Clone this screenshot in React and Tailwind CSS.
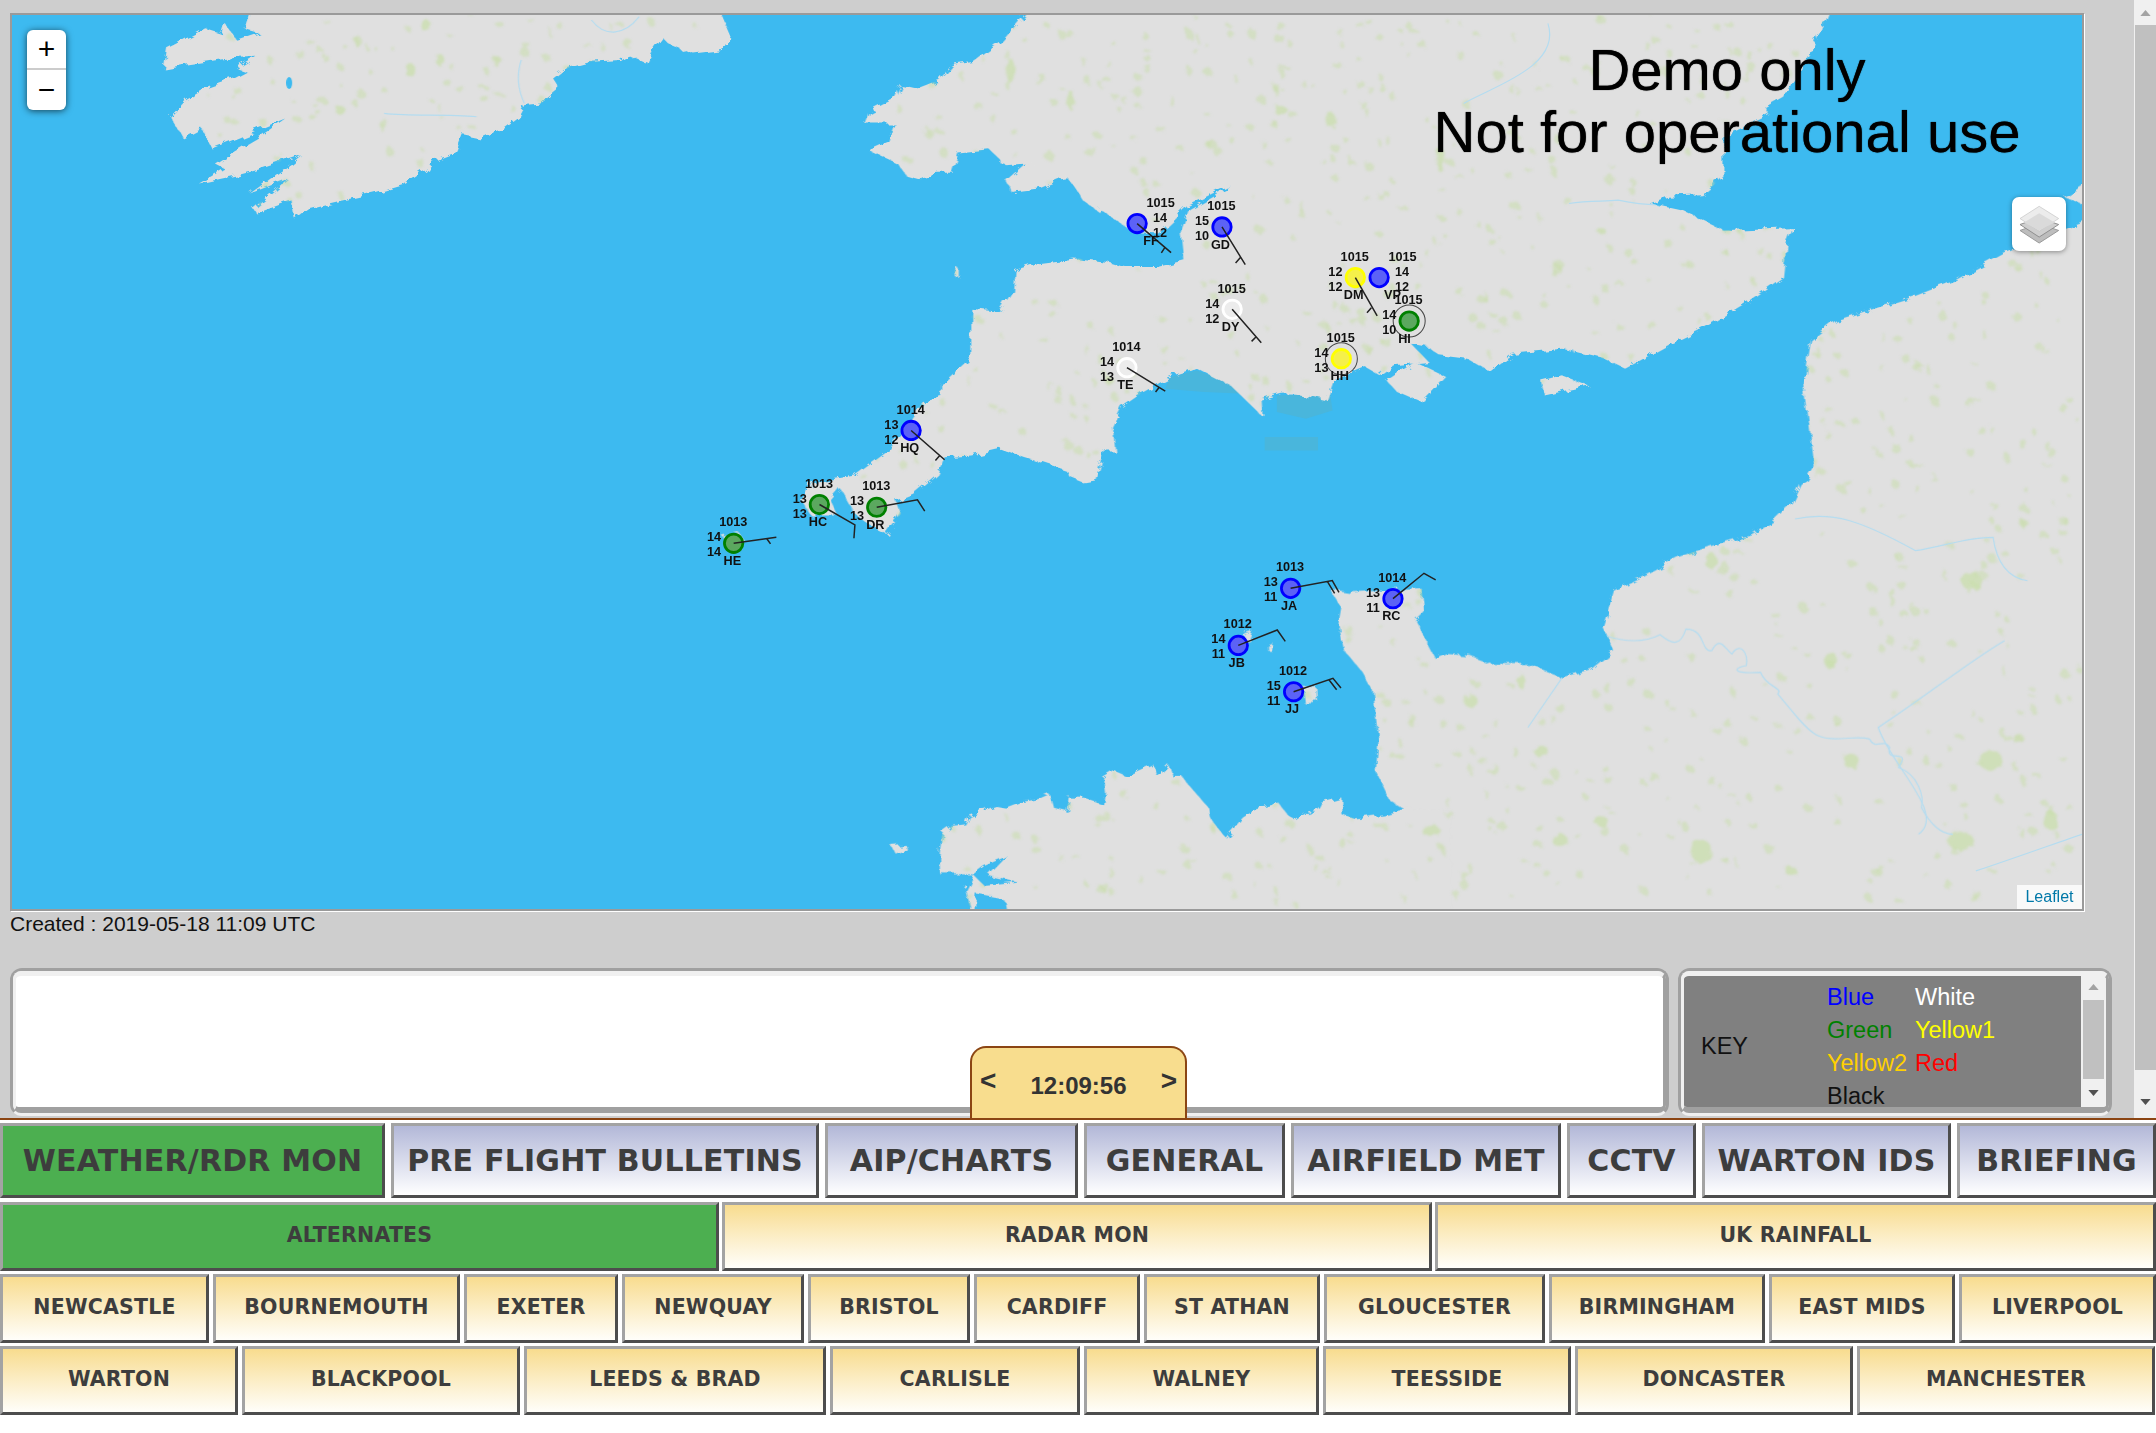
const Z9 = 'translate(100 0) scale(0.6378 0.3333)'
const Z10 = 'translate(1000 0) scale(0.7015 0.3333)'
const Z3 = 'translate(680 180) scale(0.4847 0.3333)'
const Z4 = 'translate(1200 540) scale(0.3333)'
const Z11 = 'translate(1200 480) scale(0.574 0.3333)'
const Z12 = 'translate(850 700) scale(0.3827 0.3333)'

// coast outlines, traced per map area
const LAND = [
  { t: Z9, d: 'M235,45 L228,88 L250,100 L215,122 L195,68 L190,100 L165,85 L125,125 L105,145 L100,205 L130,195 L200,175 L245,170 L215,205 L230,215 L210,235 L165,265 L135,300 L110,350 L120,380 L130,415 L160,385 L175,445 L240,395 L290,355 L250,410 L205,460 L180,490 L195,505 L155,550 L215,525 L245,510 L315,465 L300,490 L235,580 L295,535 L240,625 L245,640 L300,600 L305,655 L325,625 L370,605 L430,580 L475,555 L510,510 L520,485 L560,455 L570,405 L595,415 L630,385 L655,350 L665,315 L690,310 L720,265 L710,235 L730,205 L770,185 L815,180 L825,165 L855,190 L865,150 L880,110 L890,130 L930,160 L975,150 L988,110 L970,30 L235,30 Z' },
  { t: Z9, d: 'M1460,30 L1440,95 L1405,135 L1370,185 L1335,195 L1315,240 L1280,265 L1255,255 L1245,295 L1205,335 L1198,370 L1245,370 L1235,425 L1205,450 L1250,490 L1265,530 L1285,540 L1310,515 L1335,515 L1345,460 L1395,450 L1420,495 L1450,490 L1420,540 L1430,575 L1470,560 L1490,535 L1520,535 L1540,600 L1568,640 L1568,30 Z' },
  { t: Z10, d: 'M40,30 L1180,30 L1165,110 L1140,210 L1115,290 L1090,320 L1095,345 L1030,410 L1030,530 L1000,585 L950,590 L925,610 L970,630 L1030,690 L1130,680 L1120,730 L1115,830 L1060,910 L1000,985 L955,1030 L890,1105 L860,1075 L800,1045 L730,1060 L695,1112 L665,1075 L625,1065 L610,1040 L585,1030 L610,1085 L560,1095 L540,1125 L520,1100 L475,1140 L465,1200 L420,1180 L370,1175 L372,1245 L330,1160 L280,1105 L230,1140 L170,1185 L155,1290 L135,1440 L120,1445 L95,1410 L0,1345 L0,930 L18,870 L20,810 L50,790 L105,775 L150,790 L205,810 L262,780 L258,700 L270,630 L320,570 L355,470 L382,395 L375,430 L325,555 L265,620 L225,700 L190,695 L150,640 L115,590 L95,530 L55,565 L15,575 L15,530 L45,490 L0,490 L0,130 Z' },
  { t: Z10, d: 'M550,1140 L590,1085 L635,1130 L600,1207 L565,1175 Z' },
  { t: Z10, d: 'M770,1140 L800,1125 L838,1155 L775,1185 Z' },
  { t: Z10, d: 'M1130,1500 L1160,1400 L1145,1150 L1155,1020 L1190,960 L1300,890 L1360,840 L1430,760 L1520,680 L1560,650 L1560,1500 Z' },
  { t: Z10, d: 'M1515,590 L1560,535 L1560,630 Z' },
  { t: Z3, d: 'M690,270 L760,250 L820,235 L880,245 L915,260 L1040,260 L1300,300 L1330,630 L1240,640 L1190,660 L1195,705 L1170,640 L1115,590 L1065,565 L1010,590 L955,635 L910,680 L890,740 L895,810 L860,810 L850,890 L835,905 L800,885 L795,860 L710,830 L660,805 L600,825 L545,830 L530,880 L480,940 L445,960 L455,1000 L425,1060 L395,1040 L360,1000 L330,925 L310,960 L325,1005 L270,1005 L250,960 L270,905 L320,895 L360,885 L430,810 L500,665 L540,650 L540,610 L600,530 L600,385 L660,395 L690,330 Z' },
  { t: Z3, d: 'M85,1065 L120,1055 L135,1085 L110,1105 Z' },
  { t: Z3, d: 'M565,260 L572,262 L572,290 L566,288 Z' },
  { t: Z11, d: 'M355,985 L330,960 L305,870 L310,780 L300,630 L280,570 L250,510 L240,430 L245,380 L225,325 L260,335 L320,330 L385,325 L390,395 L375,420 L410,535 L430,520 L470,525 L510,550 L570,550 L630,590 L680,565 L720,510 L700,440 L720,330 L765,290 L830,230 L900,190 L960,160 L1000,115 L1030,65 L1045,10 L1055,0 L1568,0 L1568,1320 L0,1320 L0,970 L20,1020 L45,1075 L95,990 L135,965 L160,1020 L200,985 L245,950 L245,1000 L265,1015 L320,1000 Z' },
  { t: Z12, d: 'M235,520 L232,470 L240,395 L265,375 L300,370 L310,345 L380,315 L405,320 L440,305 L490,295 L520,280 L530,320 L565,330 L570,290 L610,290 L660,310 L665,275 L660,230 L690,210 L720,225 L790,190 L800,225 L830,190 L840,225 L865,225 L890,260 L935,320 L940,360 L980,410 L1025,350 L1060,325 L1115,310 L1125,335 L1160,355 L1185,335 L1215,340 L1230,305 L1280,290 L1280,340 L1320,352 L1400,340 L1450,325 L1568,330 L1568,660 L410,660 L400,595 L330,580 L320,660 L300,565 L320,520 L350,555 L440,545 L360,525 L410,465 L350,495 L320,520 Z' },
  { t: Z12, d: 'M108,435 L145,432 L148,445 L118,458 Z' },
  { t: Z4, d: 'M305,435 L350,440 L352,482 L310,485 Z' },
  { t: Z4, d: 'M130,278 L155,270 L145,298 L128,300 Z' },
  { t: Z4, d: 'M202,315 L218,308 L214,330 L203,330 Z' },
]

const RIVERS = [
  { t: Z11, d: 'M705,465 C750,490 780,480 800,462 C820,490 835,500 845,445 C880,445 870,515 890,510 C905,460 915,510 925,520 C940,480 955,520 950,555 C930,560 920,580 975,575 C985,620 1015,620 1005,640 C1030,690 1050,740 1070,760 C1100,790 1140,760 1165,775 C1175,810 1190,770 1200,800 C1190,850 1240,800 1215,860 C1250,880 1260,950 1255,980 C1270,1030 1290,1060 1310,1060' },
  { t: Z11, d: 'M1035,115 C1100,90 1150,120 1245,210 C1290,200 1330,170 1380,170 C1385,230 1400,290 1440,300' },
  { t: Z11, d: 'M630,590 C610,640 590,690 570,740' },
  { t: Z11, d: 'M1250,1060 C1300,1000 1200,850 1180,740 C1260,650 1340,540 1400,480' },
  { t: Z11, d: 'M1350,1170 C1420,1130 1500,1080 1535,1060' },
  { t: Z10, d: 'M1020,590 C960,615 940,625 880,600 C860,605 840,600 810,610' },
  { t: Z10, d: 'M780,70 C800,200 700,260 660,310' },
  { t: Z9, d: 'M770,60 C790,110 820,110 845,50 M660,180 C650,240 660,290 665,310 M445,340 C490,350 540,340 590,350' },
]

const SHALLOWS = [
  { t: Z3, d: 'M1010,590 L1065,570 L1115,595 L1165,640 L1080,635 L1000,625 Z' },
  { t: Z3, d: 'M1230,645 L1340,640 L1345,690 L1290,715 L1230,695 Z' },
  { t: Z3, d: 'M1205,770 L1315,770 L1315,810 L1205,810 Z' },
]

// hand placed woodland blobs
const WOODS = [
  [1470, 700, 7, 6], [1540, 750, 7, 6], [1700, 850, 10, 12], [1830, 660, 6, 9], [1990, 760, 12, 10],
  [1970, 580, 10, 9], [1430, 830, 9, 6], [1600, 820, 7, 5], [1790, 870, 6, 4], [1560, 840, 8, 6],
  [1960, 840, 13, 9], [1850, 760, 8, 7], [2050, 820, 7, 10], [1520, 680, 4, 7], [1710, 560, 6, 8],
  [1280, 110, 7, 4], [1330, 120, 4, 8], [1440, 160, 4, 12], [1010, 70, 4, 12], [1070, 100, 3, 10],
  [425, 25, 6, 5], [410, 70, 5, 7], [340, 110, 5, 4], [440, 60, 4, 6], [1520, 400, 5, 3], [1600, 230, 4, 3],
]

const mulberry = seed => () => {
  seed = (seed + 0x6d2b79f5) | 0
  let t = Math.imul(seed ^ (seed >>> 15), 1 | seed)
  t = (t + Math.imul(t ^ (t >>> 7), 61 | t)) ^ t
  return ((t ^ (t >>> 14)) >>> 0) / 4294967296
}
const rnd = mulberry(42)
const SPECKS = Array.from({ length: 2200 }, () => [
  200 + rnd() * 1880, 15 + rnd() * 890, 1 + rnd() * 4, 1 + rnd() * 4,
])

// x, y: circle centre on the page, right: figures stand on the right side
const STATIONS = [
  { id: 'FF', qnh: 1015, a: 14, b: 12, x: 1136.6, y: 223.3, c: 'blue', right: true, idx: 14.5 },
  { id: 'GD', qnh: 1015, a: 15, b: 10, x: 1221.4, y: 226.7, c: 'blue' },
  { id: 'DM', qnh: 1015, a: 12, b: 12, x: 1354.7, y: 277.3, c: 'yellow' },
  { id: 'VP', qnh: 1015, a: 14, b: 12, x: 1378.5, y: 277.3, c: 'blue', right: true, idx: 14 },
  { id: 'DY', qnh: 1015, a: 14, b: 12, x: 1231.6, y: 309, c: 'white' },
  { id: 'TE', qnh: 1014, a: 14, b: 13, x: 1126.4, y: 367.3, c: 'white' },
  { id: 'HI', qnh: 1015, a: 14, b: 10, x: 1408.5, y: 320.7, c: 'green', ring: true, idx: -4 },
  { id: 'HH', qnh: 1015, a: 14, b: 13, x: 1340.7, y: 358.3, c: 'yellow', ring: true },
  { id: 'HQ', qnh: 1014, a: 13, b: 12, x: 910.7, y: 430, c: 'blue' },
  { id: 'HC', qnh: 1013, a: 13, b: 13, x: 819, y: 504, c: 'green' },
  { id: 'DR', qnh: 1013, a: 13, b: 13, x: 876.3, y: 506.7, c: 'green' },
  { id: 'HE', qnh: 1013, a: 14, b: 14, x: 733.3, y: 542.7, c: 'green' },
  { id: 'JA', qnh: 1013, a: 13, b: 11, x: 1290, y: 587.7, c: 'blue' },
  { id: 'RC', qnh: 1014, a: 13, b: 11, x: 1392.3, y: 598, c: 'blue' },
  { id: 'JB', qnh: 1012, a: 14, b: 11, x: 1237.7, y: 644.7, c: 'blue' },
  { id: 'JJ', qnh: 1012, a: 15, b: 11, x: 1293, y: 691, c: 'blue' },
]

const COLOURS = {
  blue: ['#0000ff', '#5c62f6'],
  green: ['#008000', '#5ba85f'],
  yellow: ['#ffff00', '#f5f04a'],
  white: ['#ffffff', '#ececec'],
}

const BARBS = [
  { t: Z3, d: 'M942,130 L1012,217 M1000,200 L992,218' },
  { t: Z3, d: 'M1117,140 L1165,253 M1155,232 L1145,248' },
  { t: Z3, d: 'M1392,292 L1437,407 M1425,382 L1416,397' },
  { t: Z3, d: 'M1138,387 L1198,487 M1187,470 L1178,483' },
  { t: Z3, d: 'M921,562 L1000,632 M988,620 L980,635' },
  { t: Z3, d: 'M476,750 L545,838 M535,825 L526,840' },
  { t: Z3, d: 'M287,972 L360,1033 L358,1073' },
  { t: Z3, d: 'M405,980 L489,958 L504,992' },
  { t: Z3, d: 'M110,1088 L198,1070 M178,1074 L186,1090' },
  { t: Z4, d: 'M270,143 L395,120 L415,155 M380,122 L402,158' },
  { t: Z4, d: 'M577,174 L670,98 L705,118' },
  { t: Z4, d: 'M113,314 L230,268 L254,302' },
  { t: Z4, d: 'M279,453 L397,413 L421,442 M385,417 L408,447' },
]

const MapArt = () => (
  <svg viewBox="12 15 2069 893" preserveAspectRatio="none" className="absolute inset-0 h-full w-full">
    <defs>
      <clipPath id="land">
        {LAND.map((l, i) => (
          <path key={i} transform={l.t} d={l.d} />
        ))}
      </clipPath>
      <filter id="soft" x="0" y="0" width="100%" height="100%">
        <feTurbulence type="fractalNoise" baseFrequency="0.12" numOctaves="2" seed="3" />
        <feDisplacementMap in="SourceGraphic" scale="8" />
        <feGaussianBlur stdDeviation="0.9" />
      </filter>
      <filter id="coast" x="0" y="0" width="100%" height="100%">
        <feTurbulence type="fractalNoise" baseFrequency="0.09" numOctaves="4" seed="7" />
        <feDisplacementMap in="SourceGraphic" scale="9" />
        <feGaussianBlur stdDeviation="0.6" />
      </filter>
    </defs>
    <rect x="12" y="15" width="2069" height="893" fill="#3dbaf0" />
    {SHALLOWS.map((s, i) => (
      <path key={i} transform={s.t} d={s.d} fill="#49b6dc" />
    ))}
    <g filter="url(#coast)">
      {LAND.map((l, i) => (
        <path key={i} transform={l.t} d={l.d} fill="#e0e0e0" />
      ))}
    </g>
    <g clipPath="url(#land)">
      <g filter="url(#soft)" fill="#c8dea8">
        {SPECKS.map((s, i) => (
          <ellipse key={i} cx={s[0]} cy={s[1]} rx={s[2]} ry={s[3]} opacity="0.5" />
        ))}
        {WOODS.map((s, i) => (
          <ellipse key={i} cx={s[0]} cy={s[1]} rx={s[2]} ry={s[3]} opacity="0.7" />
        ))}
      </g>
      {RIVERS.map((r, i) => (
        <path key={i} transform={r.t} d={r.d} fill="none" stroke="#b4dcf0" strokeWidth="1.2" vectorEffect="non-scaling-stroke" />
      ))}
      <ellipse cx="289" cy="83" rx="3" ry="6" fill="#3dbaf0" />
    </g>
    {STATIONS.map(s => (
      <g key={s.id}>
        {s.ring && <circle cx={s.x} cy={s.y} r="16" fill="none" stroke="#444" strokeWidth="1" />}
        <circle cx={s.x} cy={s.y} r="9.2" fill={COLOURS[s.c][1]} stroke={COLOURS[s.c][0]} strokeWidth="2.8" />
      </g>
    ))}
    {BARBS.map((b, i) => (
      <path key={i} transform={b.t} d={b.d} fill="none" stroke="#222" strokeWidth="1.5" vectorEffect="non-scaling-stroke" />
    ))}
  </svg>
)

const Figure = ({ x, y, children }) => (
  <div
    className="absolute -translate-x-1/2 -translate-y-1/2 whitespace-nowrap text-[12.7px] leading-none font-bold text-[#111]"
    style={{ left: x - 12, top: y - 15 }}
  >
    {children}
  </div>
)

const Station = ({ s }) => {
  const side = s.right ? 23.5 : -19.3
  return (
    <>
      <Figure x={s.x + (s.right ? 24 : 0)} y={s.y - 20.5}>{s.qnh}</Figure>
      <Figure x={s.x + side} y={s.y - 5.5}>{s.a}</Figure>
      <Figure x={s.x + side} y={s.y + 9.5}>{s.b}</Figure>
      <Figure x={s.x + (s.idx || -1)} y={s.y + 18}>{s.id}</Figure>
    </>
  )
}

const Arrow = ({ up, className }) => (
  <svg viewBox="0 0 12 7" className={className}>
    <path d={up ? 'M6,0 L12,7 L0,7 Z' : 'M0,0 L12,0 L6,7 Z'} fill="currentColor" />
  </svg>
)

const LayersIcon = () => (
  <svg viewBox="355 612 128 124" className="h-[41px] w-[43px]">
    <path d="M418,672 L477,692 L418,730 L360,692 Z" fill="#bdbdbd" stroke="#999" strokeWidth="3" />
    <path d="M418,654 L477,674 L418,712 L360,674 Z" fill="#cfcfcf" stroke="#8f8f8f" strokeWidth="3" />
    <path d="M418,619 L477,656 L418,694 L360,656 Z" fill="#ececec" stroke="#c4c4c4" strokeWidth="2" />
    <path d="M418,640 L465,668 L418,692 L372,668 Z" fill="#dadada" />
  </svg>
)

const Panel = ({ className, children }) => (
  <div className={`rounded-[12px] border-[3px] border-t-[#a0a0a0] border-l-[#a0a0a0] border-r-[#a0a0a0] border-b-[#f0f0f0] bg-[#f0f0f0] ${className}`}>
    <div className="h-full rounded-[8px] border-t-[5px] border-l-[3px] border-r-[3px] border-b-[6px] border-t-[#f0f0f0] border-l-[#f0f0f0] border-r-[#a0a0a0] border-b-[#a0a0a0] overflow-hidden">
      {children}
    </div>
  </div>
)

const ROW1 = [
  ['WEATHER/RDR MON', 'w-[385px]', true],
  ['PRE FLIGHT BULLETINS', 'w-[428px]'],
  ['AIP/CHARTS', 'w-[253px]'],
  ['GENERAL', 'w-[201px]'],
  ['AIRFIELD MET', 'w-[270px]'],
  ['CCTV', 'w-[129px]'],
  ['WARTON IDS', 'w-[249px]'],
  ['BRIEFING', 'w-[199px]'],
]
const ROW2 = [
  ['ALTERNATES', 'w-[719px]', true],
  ['RADAR MON', 'w-[710px]'],
  ['UK RAINFALL', 'w-[721px]'],
]
const ROW3 = [
  ['NEWCASTLE', 'w-[209px]'],
  ['BOURNEMOUTH', 'w-[247px]'],
  ['EXETER', 'w-[154px]'],
  ['NEWQUAY', 'w-[182px]'],
  ['BRISTOL', 'w-[162px]'],
  ['CARDIFF', 'w-[166px]'],
  ['ST ATHAN', 'w-[176px]'],
  ['GLOUCESTER', 'w-[221px]'],
  ['BIRMINGHAM', 'w-[216px]'],
  ['EAST MIDS', 'w-[186px]'],
  ['LIVERPOOL', 'w-[197px]'],
]
const ROW4 = [
  ['WARTON', 'w-[238px]'],
  ['BLACKPOOL', 'w-[278px]'],
  ['LEEDS & BRAD', 'w-[302px]'],
  ['CARLISLE', 'w-[250px]'],
  ['WALNEY', 'w-[235px]'],
  ['TEESSIDE', 'w-[248px]'],
  ['DONCASTER', 'w-[278px]'],
  ['MANCHESTER', 'w-[298px]'],
]

const NavButton = ({ label, width, active, tab, small }) => (
  <button
    className={`flex h-full shrink-0 items-center justify-center border-[3px] border-t-[#a3a3a3] border-l-[#a3a3a3] border-r-[#4d4d4d] border-b-[#4d4d4d] font-['DejaVu_Sans',sans-serif] font-bold whitespace-nowrap text-[#3d3d3d] ${width} ${
      small ? 'pb-[3px] text-[20.5px] tracking-[0.2px]' : 'text-[30px] tracking-[0.2px]'
    } ${
      active
        ? 'bg-[#4caf50]'
        : tab
          ? 'bg-linear-to-b from-[#b3b8d8] to-[#ffffff]'
          : 'bg-linear-to-b from-[#f8dc8e] to-[#fffefa]'
    }`}
  >
    {label}
  </button>
)

const NavRow = ({ items, className, gap, tab, small }) => (
  <div className={`flex ${gap} ${className}`}>
    {items.map(([label, width, active]) => (
      <NavButton key={label} label={label} width={width} active={active} tab={tab} small={small} />
    ))}
  </div>
)

export default function App() {
  return (
    <div className="relative h-[1433px] w-[2156px] overflow-hidden bg-white font-['Liberation_Sans',Arial,sans-serif]">
      <div className="relative flex h-[1118px] bg-[#cecece]">
        <div className="w-[2132px] pt-[13px] pl-[10px]">
          {/* Map */}
          <div className="h-[898px] w-[2074px] border-2 border-[#9a9a9a] shadow-[1px_1px_0_#fff]">
            <div className="relative h-[894px] w-[2070px] overflow-hidden">
              <MapArt />
              {STATIONS.map(s => (
                <Station key={s.id} s={s} />
              ))}
              <div className="absolute top-[24px] left-[1365px] w-[700px] text-center text-[58px] leading-[62px] text-black [text-shadow:0_0_1px_#000]">
                Demo only
                <br />
                Not for operational use
              </div>
              <div className="absolute top-[15px] left-[15px] flex h-[80px] w-[39px] flex-col overflow-hidden rounded-[6px] bg-white shadow-[0_1px_7px_rgba(0,0,0,0.65)]">
                <div className="flex h-[40px] items-center justify-center border-b-2 border-[#ccc] text-[30px] leading-none text-black">+</div>
                <div className="flex h-[40px] items-center justify-center text-[30px] leading-none text-black">−</div>
              </div>
              <div className="absolute top-[182px] left-[2000px] flex h-[54px] w-[54px] items-center justify-center rounded-[7px] bg-white shadow-[0_1px_5px_rgba(0,0,0,0.4)]">
                <LayersIcon />
              </div>
              <div className="absolute right-0 bottom-0 flex h-[24px] w-[65px] items-center justify-center bg-white/80 text-[16px] text-[#0078a8]">
                Leaflet
              </div>
            </div>
          </div>

          <div className="mt-px h-[24px] text-[21px] leading-[24px] whitespace-nowrap text-[#111]">
            Created : 2019-05-18 11:09 UTC
          </div>

          <div className="mt-[32px] flex gap-[9px]">
            <Panel className="h-[148px] w-[1659px]">
              <div className="h-full bg-white" />
            </Panel>
            <Panel className="h-[148px] w-[434px]">
              <div className="flex h-full">
                <div className="flex h-full w-[399px] overflow-hidden bg-[#808080] text-[23.5px] leading-[33px]">
                  <div className="w-[143px] pt-[54px] pl-[17px] text-[#111]">KEY</div>
                  <div className="grid h-[132px] grid-cols-[88px_1fr] grid-rows-[33px_33px_33px_33px] pt-[5px]">
                    <span className="text-[#0000ff]">Blue</span>
                    <span className="text-white">White</span>
                    <span className="text-[#008000]">Green</span>
                    <span className="text-[#ffff00]">Yellow1</span>
                    <span className="text-[#ffd000]">Yellow2</span>
                    <span className="text-[#ff0000]">Red</span>
                    <span className="text-[#111]">Black</span>
                  </div>
                </div>
                <div className="flex w-[25px] flex-col items-center bg-[#f0f0f0]">
                  <Arrow up className="mt-[8px] h-[6px] w-[11px] text-[#a3a3a3]" />
                  <div className="mt-[10px] h-[79px] w-[21px] bg-[#c0c0c0]" />
                  <Arrow className="mt-[11px] h-[6px] w-[11px] text-[#505050]" />
                </div>
              </div>
            </Panel>
          </div>
        </div>

        {/* Page scrollbar */}
        <div className="ml-[2px] flex h-full w-[22px] flex-col items-center bg-[#f0f0f0]">
          <Arrow up className="mt-[10px] h-[6px] w-[11px] text-[#a3a3a3]" />
          <div className="mt-[9px] h-[1045px] w-[21px] bg-[#c0c0c0]" />
          <Arrow className="mt-[29px] h-[6px] w-[11px] text-[#505050]" />
        </div>

        {/* Clock tab */}
        <div className="absolute bottom-0 left-[970px] flex h-[72px] w-[217px] items-start justify-between rounded-t-[16px] border-2 border-b-0 border-[#8b4513] bg-[#f8dd8e] px-[8px] pt-[19px] text-[#333]">
          <span className="text-[28px] leading-[28px] font-bold">&lt;</span>
          <span className="pt-[4px] text-[24px] leading-[30px] font-bold">12:09:56</span>
          <span className="text-[28px] leading-[28px] font-bold">&gt;</span>
        </div>
      </div>
      <div className="h-[2px] bg-[#8b4513]" />

      <NavRow items={ROW1} tab gap="gap-[6px]" className="mt-[3px] h-[75px]" />
      <NavRow items={ROW2} small gap="gap-[3px]" className="mt-[4px] h-[69px]" />
      <NavRow items={ROW3} small gap="gap-[4px]" className="mt-[3px] h-[69px]" />
      <NavRow items={ROW4} small gap="gap-[4px]" className="mt-[3px] h-[69px]" />
    </div>
  )
}
